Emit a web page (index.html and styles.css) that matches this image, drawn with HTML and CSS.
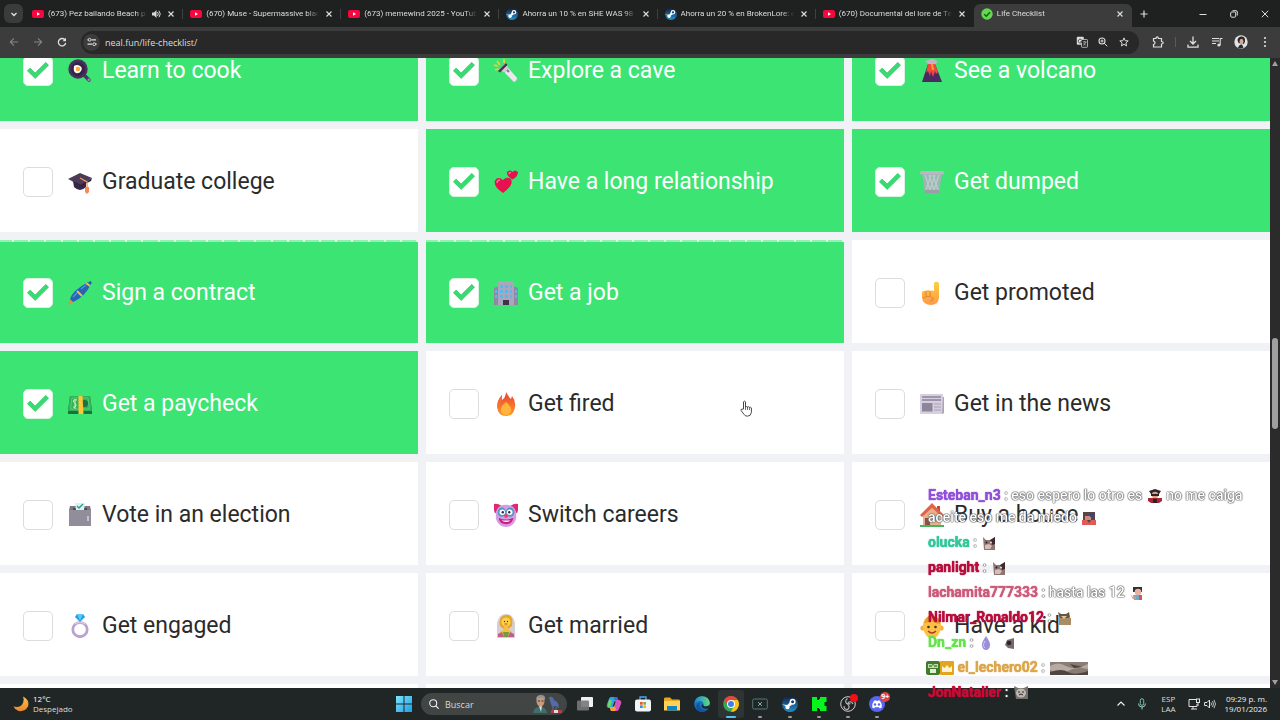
FILE: index.html
```html
<!DOCTYPE html>
<html lang="es">
<head>
<meta charset="utf-8">
<title>Life Checklist</title>
<link rel="stylesheet" href="styles.css">
</head>
<body>
<svg class="defs" aria-hidden="true">
  <defs>
    <linearGradient id="gFire" x1="0" y1="0" x2="0" y2="1"><stop offset="0" stop-color="#e8412f"/><stop offset="1" stop-color="#ff9a2a"/></linearGradient>
    <linearGradient id="gSkin" x1="0" y1="0" x2="0" y2="1"><stop offset="0" stop-color="#ffcf3f"/><stop offset="1" stop-color="#fb9a4b"/></linearGradient>
    <linearGradient id="gWin" x1="0" y1="0" x2="1" y2="1"><stop offset="0" stop-color="#7fe3fb"/><stop offset="1" stop-color="#1d9fe8"/></linearGradient>
    <linearGradient id="gEdge" x1="0" y1="0" x2="1" y2="0"><stop offset="0" stop-color="#1b84d8"/><stop offset="1" stop-color="#5fdc7c"/></linearGradient>
    <linearGradient id="gMoon" x1="0" y1="0" x2="0" y2="1"><stop offset="0" stop-color="#ffc14a"/><stop offset="1" stop-color="#e8862c"/></linearGradient>
    <linearGradient id="gSteam" x1="0" y1="0" x2="0" y2="1"><stop offset="0" stop-color="#13203f"/><stop offset="1" stop-color="#2191cf"/></linearGradient>
    <symbol id="yt" viewBox="0 0 12 12"><rect y="2" width="12" height="8" rx="2" fill="#f5083f"/><path d="M5 4.200 8 6 5 7.800z" fill="#fff"/></symbol>
    <symbol id="steam" viewBox="0 0 16 16"><circle cx="8" cy="8" r="8" fill="url(#gSteam)"/><circle cx="10.600" cy="5.800" r="3" fill="#fff"/><circle cx="10.600" cy="5.800" r="1.500" fill="#1a3a66"/><path d="M0 8.500 6 11l4-2-2-3-2.500 3z" fill="#fff"/><circle cx="5.500" cy="11" r="2.200" fill="#fff"/></symbol>
    <symbol id="x" viewBox="0 0 8 8"><path d="M1.500 1.500 6.500 6.500M6.500 1.500 1.500 6.500" stroke="currentColor" stroke-width="1.100" fill="none"/></symbol>
    <symbol id="cat" viewBox="0 0 14 14"><path d="M1 1 4 4h5l4-3v13H2z" fill="#8d7672"/><path d="M8 4l5-3v7l-3 1z" fill="#40292c"/><path d="M3 9l4-1 3 2-2 3H3z" fill="#d7bdb6"/><circle cx="4.500" cy="6.500" r="1" fill="#2c1d20"/><circle cx="9" cy="6.500" r="1" fill="#f0dcd8"/></symbol>
  </defs>
</svg>

<header class="tabstrip">
  <button class="tab-search" aria-label="Buscar pestañas"><svg class="i8" viewBox="0 0 8 8"><path d="M1.500 3 4 5.500 6.500 3" fill="none" stroke="#e4e4e4" stroke-width="1.300"/></svg></button>
  <nav class="tabs">
    <div class="tab"><svg class="i12"><use href="#yt"/></svg><span class="tab-title">(673) Pez bailando Beach party</span><svg class="i10" viewBox="0 0 10 10"><path d="M1 3.500h2L5.500 1v8L3 6.500H1z" fill="#d8d8d8"/><path d="M6.500 3q1.500 2 0 4M8 1.800q2.500 3.200 0 6.400" fill="none" stroke="#d8d8d8"/></svg><button class="close" aria-label="Cerrar"><svg class="i8"><use href="#x"/></svg></button></div>
    <div class="tab"><svg class="i12"><use href="#yt"/></svg><span class="tab-title">(670) Muse - Supermassive black hole</span><button class="close" aria-label="Cerrar"><svg class="i8"><use href="#x"/></svg></button></div>
    <div class="tab"><svg class="i12"><use href="#yt"/></svg><span class="tab-title">(673) memewind 2025 - YouTube</span><button class="close" aria-label="Cerrar"><svg class="i8"><use href="#x"/></svg></button></div>
    <div class="tab"><svg class="i12"><use href="#steam"/></svg><span class="tab-title">Ahorra un 10 % en SHE WAS 98 en</span><button class="close" aria-label="Cerrar"><svg class="i8"><use href="#x"/></svg></button></div>
    <div class="tab"><svg class="i12"><use href="#steam"/></svg><span class="tab-title">Ahorra un 20 % en BrokenLore: en</span><button class="close" aria-label="Cerrar"><svg class="i8"><use href="#x"/></svg></button></div>
    <div class="tab"><svg class="i12"><use href="#yt"/></svg><span class="tab-title">(670) Documental del lore de Team</span><button class="close" aria-label="Cerrar"><svg class="i8"><use href="#x"/></svg></button></div>
    <div class="tab active"><svg class="i12" viewBox="0 0 12 12"><circle cx="6" cy="6" r="5.700" fill="#62d84e"/><path d="M3.200 6.200 5.300 8.200 9 4.200" fill="none" stroke="#1d5c1b" stroke-width="1.500"/></svg><span class="tab-title">Life Checklist</span><button class="close" aria-label="Cerrar"><svg class="i8"><use href="#x"/></svg></button></div>
  </nav>
  <button class="newtab" aria-label="Nueva pestaña"><svg class="i8" viewBox="0 0 8 8"><path d="M4 .5v7M.5 4h7" stroke="#ddd" stroke-width="1.200"/></svg></button>
  <div class="win">
    <button aria-label="Minimizar"><svg class="i8" viewBox="0 0 8 8"><path d="M.5 4.500h7" stroke="#ddd"/></svg></button>
    <button aria-label="Restaurar"><svg class="i8" viewBox="0 0 8 8"><rect x=".7" y="2" width="5" height="5.200" rx="1" fill="none" stroke="#ddd"/><path d="M2.500.7h3.500q1.300 0 1.300 1.300v3.500" fill="none" stroke="#ddd"/></svg></button>
    <button aria-label="Cerrar ventana"><svg class="i8" viewBox="0 0 8 8"><path d="M.8.8l6.400 6.400M7.200.8.8 7.200" stroke="#ddd"/></svg></button>
  </div>
</header>

<div class="toolbar">
  <button class="tb dim" aria-label="Atrás"><svg class="i10" viewBox="0 0 10 10"><path d="M9 5H1.500M5 1.300 1.300 5 5 8.700" fill="none" stroke="currentColor" stroke-width="1.100"/></svg></button>
  <button class="tb dim" aria-label="Adelante"><svg class="i10" viewBox="0 0 10 10"><path d="M1 5h7.500M5 1.300 8.700 5 5 8.700" fill="none" stroke="currentColor" stroke-width="1.100"/></svg></button>
  <button class="tb" aria-label="Recargar"><svg class="i10" viewBox="0 0 10 10"><path d="M8.200 3.200A3.700 3.700 0 1 0 8.700 6" fill="none" stroke="currentColor" stroke-width="1.300"/><path d="M9 .8v3.500H5.500z" fill="currentColor"/></svg></button>
  <div class="omnibox">
    <button class="site" aria-label="Información del sitio"><svg class="i10" viewBox="0 0 10 10"><path d="M.5 2.800h1M4.500 2.800H9M.5 7.200H5M8.700 7.200h1" stroke="#ddd" stroke-width="1.200"/><circle cx="2.600" cy="2.800" r="1.400" fill="none" stroke="#ddd"/><circle cx="7.200" cy="7.200" r="1.400" fill="none" stroke="#ddd"/></svg></button>
    <input class="url" aria-label="Dirección" value="neal.fun/life-checklist/">
    <button class="ob" aria-label="Traducir"><svg class="i12" viewBox="0 0 12 12"><rect x=".8" y=".8" width="7" height="8" rx="1" fill="#ddd"/><rect x="5.500" y="3.500" width="6" height="7.800" rx=".7" fill="#282828" stroke="#ccc" stroke-width=".8"/><path d="M5.500 3.800A1.900 1.900 0 1 0 6 5.500H4.500" fill="none" stroke="#444" stroke-width=".9"/><path d="M7 6h3.500M8.700 5v1M7.200 9.300Q9.500 8 9.800 6M7.500 7.300 9.800 9.300" stroke="#ccc" stroke-width=".7" fill="none"/></svg></button>
    <button class="ob" aria-label="Zoom"><svg class="i10" viewBox="0 0 10 10"><circle cx="4" cy="4" r="3" fill="none" stroke="#ddd" stroke-width="1.100"/><path d="M6.200 6.200 9.300 9.300M4 2.500v3M2.500 4h3" stroke="#ddd"/></svg></button>
    <button class="ob" aria-label="Favorito"><svg class="i10" viewBox="0 0 10 10"><path d="M5 .9 6.200 3.700l3 .2-2.300 2 .7 3L5 7.300 2.400 8.900l.7-3-2.300-2 3-.2z" fill="none" stroke="#ddd"/></svg></button>
  </div>
  <button class="tb" aria-label="Extensiones"><svg class="i12" viewBox="0 0 12 12"><path d="M1.500 2.500H4q0-1.700 1.200-1.700T6.500 2.500h3v3q1.700 0 1.700 1.200T9.500 8v3h-8V8.500Q3 8.300 3 6.800T1.500 5z" fill="none" stroke="currentColor" stroke-width="1.200"/></svg></button>
  <span class="divider"></span>
  <button class="tb" aria-label="Descargas"><svg class="i12" viewBox="0 0 12 12"><path d="M6 .5v7M3 5l3 3 3-3M1 8.500v2.700h10V8.500" fill="none" stroke="currentColor" stroke-width="1.300"/></svg></button>
  <button class="tb" aria-label="Multimedia"><svg class="i12" viewBox="0 0 12 12"><path d="M1 2.500h7M1 5h7M1 7.500h4M9.200 9.500V2.500H11.500" fill="none" stroke="currentColor" stroke-width="1.100"/><circle cx="7.800" cy="9" r="1.500" fill="currentColor"/></svg></button>
  <button class="tb" aria-label="Perfil"><svg class="i14" viewBox="0 0 14 14"><circle cx="7" cy="7" r="6.700" fill="#dfe3e4"/><path d="M3.500 5q1-4 4.500-3.500t3 5L10 9 4.500 8z" fill="#2c2527"/><ellipse cx="7.500" cy="6.500" rx="2" ry="2.700" fill="#d8a797"/><path d="M4 13q1-4 4-3.500l1.500 3Q7 14 4 13" fill="#2a2a33"/></svg></button>
  <button class="tb" aria-label="Menú"><svg class="i12" viewBox="0 0 12 12" fill="currentColor"><circle cx="6" cy="2" r="1.100"/><circle cx="6" cy="6" r="1.100"/><circle cx="6" cy="10" r="1.100"/></svg></button>
</div>

<div class="viewport">
  <main class="page">
    <div class="grid">
      <label class="card done"><input type="checkbox" checked><svg class="emoji" viewBox="0 0 24 24"><path d="M16 16l5 5" stroke="#4c3569" stroke-width="3.500" stroke-linecap="round"/><circle cx="20.800" cy="20.800" r="1.200" fill="#a590bd"/><circle cx="10" cy="10" r="9.700" fill="#49305f"/><circle cx="10" cy="10" r="7" fill="#352348"/><path d="M6 7q3-2 6 0t1 5-5 2-2-7" fill="#fff"/><circle cx="10" cy="10" r="2.300" fill="#ffad35"/></svg><span>Learn to cook</span></label>
      <label class="card done"><input type="checkbox" checked><svg class="emoji" viewBox="0 0 24 24"><path d="M1 11l4-1M3 2l3 4M10 0v4M0 6l4 1" stroke="#f8c931" stroke-width="1.800"/><path d="M5 11 12 4l3 6 8 9q1 3-3 4l-8-9z" fill="#d6cadb"/><path d="M11 14l4-4 8 9-3 4z" fill="#eee5ef"/><path d="M4 12 12 4l1.500 2L6 13.500z" fill="#463650"/><path d="M13 11l2 2" stroke="#8b7397" stroke-width="2"/></svg><span>Explore a cave</span></label>
      <label class="card done"><input type="checkbox" checked><svg class="emoji" viewBox="0 0 24 24"><path d="M7 4Q4 1 9 1q4-3 6 0 4 1 1 4H8z" fill="#bfb4c4"/><path d="M8 5h7l7 18H2z" fill="#4b2a63"/><path d="M8 5h7l3 8-2 2-1-3-2 6-2-6-1 5-2-5-2 2z" fill="#f4483f"/><path d="M11 5h2l1 6h-2z" fill="#ff9a43"/></svg><span>See a volcano</span></label>

      <label class="card"><input type="checkbox"><svg class="emoji" viewBox="0 0 24 24"><path d="M5 11h13v6q-6 6-12 0z" fill="#372548"/><path d="M0 9 12 3l12 5-11 7z" fill="#4c3b58"/><path d="M0 9l13 6 11-7-1 3-10 5z" fill="#2f213b"/><path d="M12 8l7 4v6" fill="none" stroke="#f6945e" stroke-width="1.300"/><path d="M17 17h4v5l-2 2-2-2z" fill="#f28b58"/></svg><span>Graduate college</span></label>
      <label class="card done"><input type="checkbox" checked><svg class="emoji" viewBox="0 0 24 24"><path d="M9 23Q-1 16 1 10.500 4 6 9 10q4-4 8-1 3 6-8 14" fill="#e8114f"/><path d="M18.500 9.500Q12 6 13 2q3-3 5.500 0Q21-1 24 2q0 5-5.500 7.500" fill="#e21350"/><path d="M3 13q0-3 3-3M15 4q0-1.500 2-1.500" stroke="#ff6aa2" stroke-width="1.500" fill="none"/></svg><span>Have a long relationship</span></label>
      <label class="card done"><input type="checkbox" checked><svg class="emoji" viewBox="0 0 24 24"><path d="M2 3h20l-3 20H5z" fill="#a9aeb7"/><path d="M4 5h16l-2 15H6z" fill="#8cbfb0"/><path d="M5 5l5 15M9 5l5 15M13 5l5 15M19 5l-5 15M15 5l-5 15M11 5 6 20" stroke="#c5c7ce" stroke-width="1.300"/><rect y="1" width="24" height="3.500" rx="1.500" fill="#b9b7c2"/><path d="M5 20h14v3H5z" fill="#9d9da9"/></svg><span>Get dumped</span></label>

      <label class="card done seam"><input type="checkbox" checked><svg class="emoji" viewBox="0 0 24 24"><path d="M0 24l2-6 4 3z" fill="#c69b51"/><path d="M2 18Q4 10 20 1l3 2Q17 16 5 21z" fill="#2765b3"/><path d="M9 10l5 5M18 2l4 3" stroke="#edbd4c" stroke-width="2"/><path d="M5 16 9 12M13 8l5-4" stroke="#4b93de" stroke-width="1.500"/><path d="M22 0l2 2-2 1-1-2z" fill="#244b81"/></svg><span>Sign a contract</span></label>
      <label class="card done seam"><input type="checkbox" checked><svg class="emoji" viewBox="0 0 24 24"><path d="M0 7l5-2v19H0zM24 7l-5-2v19h5z" fill="#9187a4"/><path d="M4 1Q12-2 20 1v23H4z" fill="#aaa6bc"/><path d="M6 4h3v3H6zM11 4h3v3h-3zM16 4h2v3h-2zM6 9h3v3H6zM11 9h3v3h-3zM16 9h2v3h-2zM6 14h3v3H6zM11 14h3v3h-3zM16 14h2v3h-2zM1 9h2v3H1zM1 14h2v3H1zM21 9h2v3h-2zM21 14h2v3h-2z" fill="#56b9ed"/><path d="M9 19h6v5H9z" fill="#403347"/></svg><span>Get a job</span></label>
      <label class="card"><input type="checkbox"><svg class="emoji" viewBox="0 0 24 24"><path d="M14 13V2q2-3 5 0v15q-1 7-8 7-8 0-9-7V11q2-2 4-1 2-2 4 0 2-1 4 0" fill="url(#gSkin)"/><path d="M6 10v6M10 10v6M3 17q5-3 10 0 1 2-3 3" fill="none" stroke="#e8873b" stroke-width="1.200"/></svg><span>Get promoted</span></label>

      <label class="card done"><input type="checkbox" checked><svg class="emoji" viewBox="0 0 24 24"><path d="M2 4h20l2 15v3H0v-3z" fill="#17733b"/><path d="M2 4h20l2 15H0z" fill="#2fb45a"/><path d="M4 6h16l1.500 11h-19z" fill="none" stroke="#5cca74"/><circle cx="16.500" cy="11.500" r="3.500" fill="#157544"/><path d="M9 8Q5 7 5.500 10q3 2 2.500 4-1 2-3 1M7 7v10" stroke="#d6f2bb" fill="none"/><path d="M10.500 4h4l1 18h-5z" fill="#ffc738"/></svg><span>Get a paycheck</span></label>
      <label class="card"><input type="checkbox"><svg class="emoji" viewBox="0 0 24 24"><path d="M12 0q2 4 5 7l1-3q4 5 3 11-1 9-9 9T3 15q0-7 5-12v5q4-3 4-8" fill="url(#gFire)"/><path d="M12 10q6 5 5 9-1 4-5 4t-5-4q-1-4 5-9" fill="#ffb43b"/><path d="M4 13Q4 8 8 3v5" fill="#f36b3f"/></svg><span>Get fired</span></label>
      <label class="card"><input type="checkbox"><svg class="emoji" viewBox="0 0 24 24"><rect y="2" width="23" height="20" rx="1" fill="#d5cfdf"/><path d="M23 5h1v16l-2 1z" fill="#aca1bc"/><path d="M2 5h19M2 8h19" stroke="#8d849c" stroke-width="1.400"/><path d="M14 12h7M14 15h7M14 18h7" stroke="#aaa2b8" stroke-width="1.200"/><rect x="2" y="11" width="10.500" height="8.500" fill="#8d8599"/></svg><span>Get in the news</span></label>

      <label class="card"><input type="checkbox"><svg class="emoji" viewBox="0 0 24 24"><path d="M2 3h20l1 4v16H1V7z" fill="#7d7787"/><path d="M1 7h22v16H1z" fill="#928d9b"/><path d="M5 5h14v2H5z" fill="#4c4655"/><path d="M7 0h10l-1 7H8z" fill="#dfeef0"/><path d="M9 3l2 2 4-4" fill="none" stroke="#1ba58d" stroke-width="1.400"/><path d="M19 13h2v5h-2z" fill="#c6c1cc"/></svg><span>Vote in an election</span></label>
      <label class="card"><input type="checkbox"><svg class="emoji" viewBox="0 0 26 26"><path d="M8 3Q4 0 0 1q-1 5 1 10l5-1zM18 3q4-3 8-2 1 5-1 10l-5-1z" fill="#df2873"/><path d="M2 10Q4 2 13 2t11 8v7q-3 9-11 9T2 17z" fill="#d79be4"/><ellipse cx="8.500" cy="10" rx="4.500" ry="5" fill="#499ac4"/><ellipse cx="17.500" cy="10" rx="4.500" ry="5" fill="#499ac4"/><circle cx="9" cy="10" r="3" fill="#fff"/><circle cx="17" cy="10" r="3" fill="#fff"/><circle cx="9.500" cy="10" r="1.300" fill="#33283f"/><circle cx="16.500" cy="10" r="1.300" fill="#33283f"/><circle cx="13" cy="14" r="2" fill="#ef3c70"/><path d="M5 16q8 4 16 0-1 7-8 7t-8-7" fill="#c42386"/><path d="M8 19h10q-5 3-10 0" fill="#fff"/></svg><span>Switch careers</span></label>
      <label class="card"><input type="checkbox"><svg class="emoji" viewBox="0 0 24 24"><path d="M3 12 12 4l9 8v10H3z" fill="#eab08c"/><path d="M17 3h3v6h-3z" fill="#bd4b3a"/><path d="M0 12 12 0l12 12-2 2L12 5 2 14z" fill="#e0644c"/><path d="M5 15h5v8H5z" fill="#8b5146"/><path d="M14 14h5v5h-5z" fill="#6cb9df"/><path d="M0 22h24v2H0z" fill="#43b65f"/></svg><span>Buy a house</span></label>

      <label class="card"><input type="checkbox"><svg class="emoji" viewBox="0 0 24 24"><circle cx="12" cy="15.500" r="7.200" fill="none" stroke="#b9a3cf" stroke-width="2.800"/><path d="M7 10q5-4 10 0" stroke="#ddcde8" stroke-width="1.500" fill="none"/><path d="M9 0h6l2 3-5 5-5-5z" fill="#249fe5"/><path d="M9 0 12 7l3-7" fill="#5bc8fc"/></svg><span>Get engaged</span></label>
      <label class="card"><input type="checkbox"><svg class="emoji" viewBox="0 0 24 24"><path d="M3 24V9q2-9 9-9t9 9v15z" fill="#d4cfd5"/><path d="M6 12Q4 2 12 1t6 11l-4 3h-4z" fill="#e3a72c"/><circle cx="12" cy="8" r="4.500" fill="#ffd148"/><path d="M10 11h4v4l4 3v5H6v-5l4-3z" fill="#f7c03c"/><circle cx="10.500" cy="7.500" r=".7" fill="#59391e"/><circle cx="13.500" cy="7.500" r=".7" fill="#59391e"/><path d="M10.500 10h3" stroke="#b74d32"/><path d="M4 20l4-2 2 5H4zM20 20l-4-2-2 5h6z" fill="#c35c8b"/><path d="M9 18h6l-1 5h-4z" fill="#6f9c40"/></svg><span>Get married</span></label>
      <label class="card"><input type="checkbox"><svg class="emoji" viewBox="0 0 24 24"><circle cx="3" cy="14" r="2.600" fill="#f7a943"/><circle cx="21" cy="14" r="2.600" fill="#f7a943"/><path d="M12 2q10 1 9 12-2 10-9 10T3 14Q2 3 12 2" fill="#ffc145"/><path d="M4 9Q6 1 14 0l-1 2q7 1 7 8-7-1-9-4-2 3-7 3" fill="#eb9b2a"/><circle cx="8.500" cy="13" r="1.300" fill="#4a3029"/><circle cx="15.500" cy="13" r="1.300" fill="#4a3029"/><path d="M8 17q4 4 8 0" fill="none" stroke="#a33d2d" stroke-width="1.400"/></svg><span>Have a kid</span></label>

      <div class="card"></div><div class="card"></div><div class="card"></div>
    </div>
  </main>
  <div class="scrollbar" aria-hidden="true"><i class="up"></i><i class="above"></i><i class="thumb"></i><i class="below"></i><i class="down"></i></div>
</div>

<footer class="taskbar">
  <div class="weather">
    <svg class="i16" viewBox="0 0 16 16"><path d="M10 .5Q17 4 15 10.500 12 16 5.500 15 2 14 .5 10.500 7 12 9.500 8 11.500 4.500 10 .5" fill="url(#gMoon)"/></svg>
    <div class="two"><span class="bright">12°C</span><span>Despejado</span></div>
  </div>
  <div class="apps">
    <button class="start" aria-label="Inicio"><svg class="i16" viewBox="0 0 16 16" fill="url(#gWin)"><path d="M0 0h7.500v7.500H0zM8.500 0H16v7.500H8.500zM0 8.500h7.500V16H0zM8.500 8.500H16V16H8.500z"/></svg></button>
    <div class="search">
      <svg class="i10" viewBox="0 0 10 10"><circle cx="4.200" cy="4.200" r="3.500" fill="none" stroke="#eee" stroke-width="1.100"/><path d="M6.800 6.800 9.700 9.700" stroke="#eee" stroke-width="1.200"/></svg>
      <input aria-label="Buscar" placeholder="Buscar">
      <svg class="art" viewBox="0 0 30 18"><path d="M0 18q1-5 5-6h4q4 1 5 6z" fill="#3f6f6d"/><path d="M6 11h3l-1 6z" fill="#ddd"/><ellipse cx="7.500" cy="6" rx="4" ry="5.500" fill="#c79a7c"/><path d="M3 5Q3 0 8 0t4 5l-2-2H5z" fill="#8f9599"/><path d="M5 6h2M8.500 6h2" stroke="#333"/><path d="M16 2q4-1 5 3 5 2 5 8l-3-2-4 1-2-6z" fill="#536ba8"/><path d="M20 12v4M23 12v4" stroke="#7b6870"/><path d="M18 15h11v3H18z" fill="#b83a42"/><path d="M21 15h4v3h-4z" fill="#ddd"/></svg>
    </div>
    <div class="icons">
      <button aria-label="Vista de tareas"><svg class="i16" viewBox="0 0 16 16"><rect x="4" y="1" width="12" height="10" rx="1" fill="#f0f0f0"/><rect y="4.500" width="12" height="10" rx="1" fill="#777" opacity=".9"/></svg></button>
      <button aria-label="Copilot"><svg class="i16" viewBox="0 0 16 16"><path d="M5 1h6l1.500 4H9L6.500 12H2.500Q0 11 1 8L3 3q.5-2 2-2" fill="#27a9df"/><path d="M2 7 3.500 3 6 5l-2 7-2-1z" fill="#71d36c"/><path d="M11 15H5l-1.500-4H7L9.500 4h4q2.500 1 1.500 4l-2 5q-.5 2-2 2" fill="#d553be"/><path d="M5 15 3.500 11H7l1-2 2 4-1 2z" fill="#f7a33c"/><path d="M8 1h3l1.500 3h-4z" fill="#3969de"/><path d="M6.800 10.500 8.500 5.500h1.200L8 10.500z" fill="#202625"/></svg></button>
      <button aria-label="Tienda"><svg class="i16" viewBox="0 0 16 16"><path d="M5 4V1h6v3" fill="none" stroke="#4da9e8" stroke-width="1.300"/><rect y="3.500" width="16" height="12" rx="2" fill="#f1f5f8"/><path d="M5 6h2.700v2.700H5z" fill="#e9562f"/><path d="M8.300 6H11v2.700H8.300z" fill="#75b72b"/><path d="M5 9.300h2.700V12H5z" fill="#2b96df"/><path d="M8.300 9.300H11V12H8.300z" fill="#f7b713"/></svg></button>
      <button aria-label="Archivos"><svg class="i16" viewBox="0 0 16 16"><path d="M0 2.500 1 1.500h5l2 2h7l1 1V14H0z" fill="#e8a921"/><path d="M0 5h16v9.500H0z" fill="#ffd257"/><path d="M3 14.500V10h10v4.500z" fill="#1584c4"/></svg></button>
      <button aria-label="Edge"><svg class="i16" viewBox="0 0 16 16"><circle cx="8" cy="8" r="7.800" fill="#1771bd"/><path d="M.3 7.500Q1.500.2 8 .2q7 .3 7.800 6.300.2 4-4.300 4-3 0-2-2.500Q9 5 6 5 2 5 .3 7.500" fill="url(#gEdge)"/><path d="M6 6.500q-2 5 3 7 3 1 5-.5-2 3-6 3-6-.5-6-6 1-3 4-3.500" fill="#1354a0"/><path d="M9.500 8q-1 2.500 2 2.500 3 0 4-2l-1 4q-5 1-7-2 0-2 2-2.500" fill="#202625"/></svg></button>
      <button class="current" aria-label="Chrome"><svg class="i16" viewBox="0 0 16 16"><circle cx="8" cy="8" r="7.800" fill="#32a852"/><path d="M1.200 4A7.800 7.800 0 0 1 14.800 4H8L5 9.700z" fill="#e8453c"/><path d="M14.800 4A7.800 7.800 0 0 1 8 15.800L11.500 9 9 4z" fill="#fbc116"/><circle cx="8" cy="8" r="4" fill="#fff"/><circle cx="8" cy="8" r="3" fill="#3e7fe8"/></svg></button>
      <button class="open" aria-label="Capturadora"><svg class="i16" viewBox="0 0 16 16"><rect x=".7" y="3" width="14.600" height="10" rx="1.500" fill="none" stroke="#527b75"/><path d="M6 6l4 4M10 6l-4 4" stroke="#83aaa4"/></svg></button>
      <button class="open" aria-label="Steam"><svg class="i16"><use href="#steam"/></svg></button>
      <button class="open" aria-label="Kick"><svg class="i16" viewBox="0 0 16 16"><path d="M1 1h5v3h2V3h1V1h6.500v5h-2v4h2v5H9v-2H8v-1H6v3H1z" fill="#07f51d"/></svg></button>
      <button class="open" aria-label="OBS"><svg class="i16 over" viewBox="0 0 16 16"><circle cx="8" cy="8" r="7.300" fill="#222426" stroke="#d2d2d2" stroke-width="1"/><path d="M7.500 2.500q-3 2-1 5 2 1 4 0M4 10q0 3.500 3.500 3.500Q10 12 8.500 9M13 8q-1-3-4-2-1.500 1-1 3" fill="none" stroke="#bbb" stroke-width="1.100"/><circle cx="14" cy="2" r="4" fill="#f50f18"/></svg></button>
      <button class="open" aria-label="Discord"><svg class="i16" viewBox="0 0 16 16"><circle cx="8" cy="8" r="8" fill="#5865f2"/><path d="M3.200 11.500Q3 7 5 4.700l2-.5.5.8h1l.5-.8 2 .5q2 2.300 1.800 6.800l-2 1-.8-1.200H6l-.8 1.200z" fill="#fff"/><circle cx="6" cy="8.500" r="1.200" fill="#5865f2"/><circle cx="10" cy="8.500" r="1.200" fill="#5865f2"/></svg><b class="badge">9+</b></button>
    </div>
  </div>
  <div class="tray">
    <svg class="i10" viewBox="0 0 10 10"><path d="M1.500 6.500 5 3l3.500 3.500" fill="none" stroke="#eee" stroke-width="1.200"/></svg>
    <svg class="i12" viewBox="0 0 12 12"><rect x="4.300" y=".7" width="3.400" height="6.600" rx="1.700" fill="none" stroke="#7cc3a9"/><path d="M2.500 5.500q0 3.500 3.500 3.500t3.500-3.500M6 9v2.500" fill="none" stroke="#9ccbbb"/></svg>
    <div class="two lang"><span>ESP</span><span>LAA</span></div>
    <svg class="i12 net" viewBox="0 0 12 12"><path d="M8 1.500H1v7h8V6M3 11h6M5 8.500V11" fill="none" stroke="#e2e2e2"/><rect x="8.500" y="1" width="3" height="3.500" fill="none" stroke="#e2e2e2"/><path d="M10 4.500V8" stroke="#e2e2e2"/></svg>
    <svg class="i12" viewBox="0 0 12 12"><path d="M.6 4.500H3L5.500 2v8L3 7.500H.6z" fill="none" stroke="#e2e2e2"/><path d="M7 4.500q1 1.500 0 3M8.500 3q2 3 0 6M10 1.800q3 4.200 0 8.400" fill="none" stroke="#e2e2e2" stroke-width=".8"/></svg>
    <div class="two clock"><span>09:29 p. m.</span><span>19/01/2026</span></div>
  </div>
</footer>

<aside class="chat">
  <p><b class="c1">Esteban_n3</b> : eso espero lo otro es <svg class="em" viewBox="0 0 14 14"><path d="M1 2 7 0l6 2-2 3H3z" fill="#2f2528"/><circle cx="7" cy="6" r="3.200" fill="#d7a288"/><path d="M3 5h8v2H3z" fill="#312224"/><path d="M0 9h14v3l-3 2H3l-3-2z" fill="#a42a35"/><path d="M5 10h4v4H5z" fill="#2b2025"/></svg> no me caiga aceite eso me da miedo <svg class="em" viewBox="0 0 14 14"><path d="M1 1h12v13H1z" fill="#5a4448"/><path d="M3 5h6v4H3z" fill="#cb8d7b"/><path d="M0 9h5l2 3 2-3h5v5H0z" fill="#e05a57"/><path d="M8 2h4v4H8z" fill="#35487a"/></svg></p>
  <p><b class="c2">olucka</b> : <svg class="em"><use href="#cat"/></svg></p>
  <p><b class="c3">panlight</b> : <svg class="em"><use href="#cat"/></svg></p>
  <p><b class="c4">lachamita777333</b> : hasta las 12 <svg class="em" viewBox="0 0 14 14"><path d="M3 1h9v5H3z" fill="#3b2c30"/><circle cx="8" cy="6" r="3.300" fill="#e7b49f"/><path d="M3 9h9v5H4z" fill="#73a7cb"/><path d="M0 8l3 3 3-1v3H3z" fill="#dd9584"/><path d="M9 9h3v5H9z" fill="#c95b58"/></svg></p>
  <p><b class="c3">Nilmar_Ronaldo12</b> : <svg class="em" viewBox="0 0 14 14"><path d="M1 1l3 2h5l3-2 1 5-2 3H3z" fill="#69543e"/><path d="M2 7h12v7H2z" fill="#a88c63"/><path d="M4 5l3 3 3-3" fill="#d8c6a4"/></svg></p>
  <p><b class="c5">Dn_zn</b> : <svg class="em" viewBox="0 0 14 14"><path d="M7 0q5 7 4 10-1 4-4 4t-4-4q-1-3 4-10" fill="#9c8edb"/><path d="M6 5q-3 5 0 7" stroke="#d1caf5" fill="none"/></svg> &nbsp;<svg class="em" viewBox="0 0 14 14"><path d="M4 4l7-2v11l-6-1-3-3z" fill="#77696e"/><circle cx="6" cy="7" r="2.300" fill="#2c2429"/></svg></p>
  <p class="badges"><svg class="em tight" viewBox="0 0 14 14"><rect width="14" height="14" rx="2" fill="#427b2f"/><path d="M2 3h4l1 2 1-2h4v4H2z" fill="#bce0a5"/><path d="M4 8h6v4H4z" fill="#e2efc9"/><path d="M3 5h3M8 5h3" stroke="#214719"/></svg><svg class="em tight" viewBox="0 0 14 14"><rect width="14" height="14" rx="1" fill="#e3a51b"/><path d="M2 5l2.500 2L7 4l2.500 3L12 5v6H2z" fill="#fff3d2"/></svg> <b class="c6">el_lechero02</b> : <svg class="em long" viewBox="0 0 38 13"><path d="M0 0h38v13H0z" fill="#8a7b73"/><path d="M0 4q8-5 16 0t22-2v5Q26 4 18 9T0 8z" fill="#b8aaa3"/><path d="M0 10q12-4 18 0t20-1v4H0zM20 2l13 3-9 1z" fill="#4e4541"/></svg></p>
  <p class="onbar"><b class="c7">JonNatalier</b> : <svg class="em" viewBox="0 0 14 14"><path d="M0 0l4 2h6l4-2v13H2z" fill="#77716d"/><ellipse cx="7" cy="7" rx="5" ry="4.500" fill="#bdb8b2"/><path d="M4 6h2M8 6h2M5 9q2-2 4 0" stroke="#292523" fill="none"/></svg></p>
</aside>
<svg class="cursor" viewBox="0 0 12 17"><path d="M3.500 9V1.800q1-1.300 2 0V7q1-.8 2 0 1-.6 2 .3 1-.4 1.900.6v4.600q-.6 3.700-4 3.700-2.500 0-3.500-2L1 10.500q-.3-1.600 1-1.300z" fill="#fff" stroke="#333" stroke-width=".9"/><path d="M5.500 7v3M7.500 7v3M9.500 7.500V10" stroke="#333" stroke-width=".7"/></svg>
</body>
</html>
```
FILE: styles.css
```css
* { box-sizing: border-box; }
body {
  margin: 0;
  height: 100vh;
  display: flex;
  flex-direction: column;
  overflow: hidden;
  background: #202625;
  font-family: "Open Sans", "Noto Sans", sans-serif;
  font-size: 9px;
  color: #dedede;
}
button {
  display: grid;
  place-items: center;
  padding: 0;
  border: 0;
  background: none;
  color: inherit;
  font: inherit;
}
input { font: inherit; color: inherit; }
svg { display: block; flex: none; }
.defs { position: absolute; width: 0; height: 0; }
.i8 { width: 8px; height: 8px; }
.i10 { width: 10px; height: 10px; }
.i12 { width: 12px; height: 12px; }
.i14 { width: 14px; height: 14px; }
.i16 { width: 16px; height: 16px; }
.over { overflow: visible; }

/* Tab strip */
.tabstrip {
  flex: none;
  height: 27px;
  display: flex;
  align-items: center;
  padding-left: 4px;
  background: #1f2020;
}
.tab-search { width: 19px; height: 19px; border-radius: 6px; background: #3a3b3b; }
.tabs { flex: 1; display: flex; align-self: stretch; margin-left: 2px; padding-top: 4px; min-width: 0; }
.tab {
  flex: 1 1 0;
  min-width: 0;
  display: flex;
  align-items: center;
  gap: 4px;
  padding: 0 8px 4px 7px;
  background: linear-gradient(#3f4040, #3f4040) right 5px / 1px 10px no-repeat;
}
.tab:nth-last-child(2) { background: none; }
.tab-title {
  flex: 1;
  min-width: 0;
  overflow: hidden;
  white-space: nowrap;
  font: 8px/12px Roboto, sans-serif;
  mask-image: linear-gradient(90deg, #000 calc(100% - 12px), transparent);
}
.close { width: 8px; height: 12px; margin-left: 2px; }
.tab.active { background: #3c3c3c; border-radius: 6px 6px 0 0; }
.newtab { width: 24px; height: 24px; }
.win { display: flex; margin-left: 31px; }
.win button { width: 31px; height: 24px; }

/* Toolbar */
.toolbar {
  flex: none;
  height: 31px;
  display: flex;
  align-items: center;
  padding: 0 3px 1px 2px;
  background: #3c3c3c;
}
.tb { width: 24px; height: 24px; flex: none; }
.dim { color: #858585; }
.omnibox {
  flex: 1;
  height: 23px;
  display: flex;
  align-items: center;
  margin: 0 7px;
  padding: 0 5px 0 2px;
  border-radius: 12px;
  background: #282828;
}
.site { width: 17px; height: 17px; border-radius: 9px; background: #3c3c3c; }
.url { flex: 1; min-width: 0; padding: 0; margin-left: 5px; border: 0; background: none; outline: 0; }
.ob { width: 21px; height: 21px; }
.divider { width: 1px; height: 10px; margin: 0 5px; background: #5b5b5b; }

/* Page */
.viewport { flex: 1; min-height: 0; display: flex; overflow: hidden; }
.page { flex: 1; overflow: hidden; background: #f1f2f5; }
.grid { display: grid; grid-template-columns: repeat(3, 1fr); gap: 8px; margin-top: -40px; }
.card {
  height: 103px;
  display: flex;
  align-items: center;
  padding: 3px 23px 0;
  background: #fff;
  color: #2b2b2b;
  font: 23px/32px Roboto, sans-serif;
}
.card.done { background: #3ce474; color: #fff; }
.card.seam {
  border-top: 2px solid #9af0ba;
  padding-top: 1px;
  border-image: repeating-linear-gradient(90deg, #92efb5 0 14px, #e4f5ec 14px 16px) 2;
}
.card input {
  appearance: none;
  flex: none;
  width: 30px;
  height: 30px;
  margin: 0 15px 0 0;
  display: grid;
  justify-content: center;
  align-content: start;
  border: 1px solid #dcdcdc;
  border-radius: 5px;
  background: #fff;
}
.card input:checked { border-color: #d5f5e0; }
.card input:checked::before {
  content: "";
  box-sizing: border-box;
  width: 20px;
  height: 12px;
  margin-top: 5px;
  border: solid #3bd873;
  border-width: 0 0 5px 5px;
  border-radius: 1px;
  transform: rotate(-45deg);
}
.emoji { width: 24px; height: 24px; margin-right: 10px; }

.scrollbar { width: 10px; display: flex; flex-direction: column; align-items: center; padding: 3px 0; background: #2b2b2b; }
.up, .down { border: solid transparent; border-width: 0 3px; }
.up { border-bottom: 5px solid #a0a0a0; }
.down { border-top: 5px solid #a0a0a0; }
.above { flex: 272; }
.thumb { flex: 91; width: 6px; border-radius: 3px; background: #9f9f9f; }
.below { flex: 251; }

/* Taskbar */
.taskbar {
  flex: none;
  height: 32px;
  display: grid;
  grid-template-columns: 1fr auto 1fr;
  align-items: center;
  background: #202625;
}
.weather { display: flex; align-items: center; gap: 4px; padding-left: 13px; }
.two { display: flex; flex-direction: column; line-height: 10px; font-size: 8px; }
.bright { color: #fff; }
.apps { display: flex; align-items: center; gap: 3px; padding-left: 2px; }
.start { width: 28px; height: 28px; }
.search {
  width: 146px;
  height: 22px;
  display: flex;
  align-items: center;
  gap: 6px;
  padding: 0 4px 0 8px;
  border-radius: 11px;
  background: #414645;
}
.search input { flex: 1; min-width: 0; padding: 0; border: 0; background: none; outline: 0; }
.search input::placeholder { color: #d8d8d8; }
.art { width: 30px; height: 18px; }
.icons { width: 322px; display: grid; grid-template-columns: repeat(11, 1fr); justify-items: center; }
.icons button { position: relative; width: 26px; height: 28px; border-radius: 3px; }
.icons .current { background: #2e3433; }
.open::after, .current::after {
  content: "";
  position: absolute;
  bottom: 0;
  width: 4px;
  height: 2px;
  border-radius: 1px;
  background: #989d9c;
}
.current::after { width: 10px; background: #55c3f3; }
.badge {
  position: absolute;
  top: 2px;
  right: 0;
  width: 10px;
  border-radius: 5px;
  background: #e0424b;
  color: #fff;
  font-size: 7px;
  line-height: 10px;
  text-align: center;
}
.tray { display: flex; align-items: center; justify-content: flex-end; padding-right: 13px; }
.tray .i10 { margin-right: 10px; }
.lang { align-items: center; margin: 0 12px 0 13px; }
.net { margin-right: 4px; }
.clock { align-items: flex-end; margin-left: 9px; color: #f0f0f0; }

/* Live chat laid over the desktop */
.chat {
  position: fixed;
  left: 928px;
  right: 12px;
  bottom: 17px;
  color: #fff;
  font: 500 14px/22px Roboto, sans-serif;
  text-shadow: 0 0 1px #444, 0 0 1px #555, 0 0 1px #555, 0 0 2px #888;
}
.chat p { margin: 3px 0 0; }
.chat b { font-weight: 700; text-shadow: 0 0 1px currentColor, 0 0 1px currentColor; }
.em { display: inline-block; width: 14px; height: 14px; margin: 0 1px 0 2px; vertical-align: -3px; }
.em.tight { margin: 0; }
.em.long { width: 38px; height: 13px; }
.c1 { color: #9150d8; }
.c2 { color: #35c79a; }
.c3 { color: #b80d3c; }
.c4 { color: #cc5b7c; }
.c5 { color: #66e34c; }
.c6 { color: #dca64b; }
.c7 { color: #c80c38; }
.badges { text-indent: -2px; }
.cursor { position: fixed; left: 740px; top: 400px; width: 12px; height: 17px; }
```
